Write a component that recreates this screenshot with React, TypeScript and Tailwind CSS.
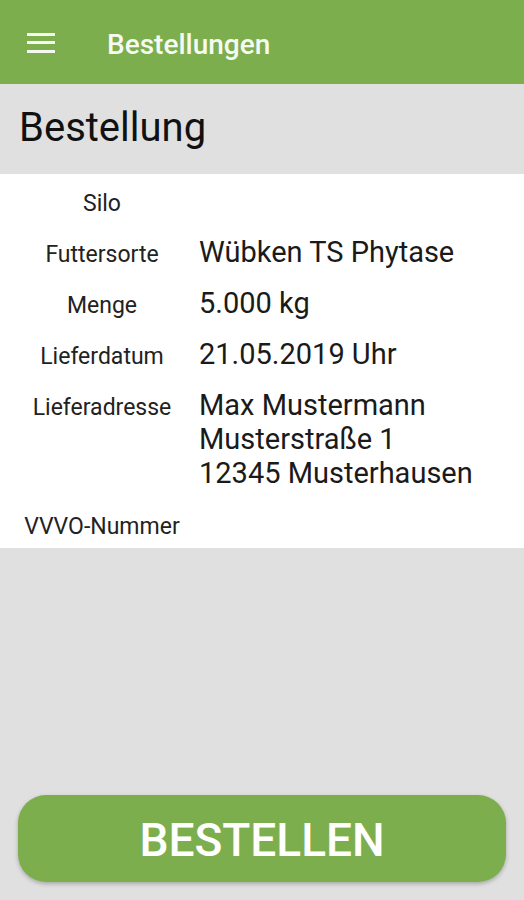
import React from "react";

const rows: { label: string; value: string[] }[] = [
  { label: "Silo", value: [] },
  { label: "Futtersorte", value: ["Wübken TS Phytase"] },
  { label: "Menge", value: ["5.000 kg"] },
  { label: "Lieferdatum", value: ["21.05.2019 Uhr"] },
  { label: "Lieferadresse", value: ["Max Mustermann", "Musterstraße 1", "12345 Musterhausen"] },
  { label: "VVVO-Nummer", value: [] },
];

export default function App() {
  return (
    <div
      className="w-[524px] h-[900px] flex flex-col bg-[#e0e0e0] overflow-hidden"
      style={{ fontFamily: "Roboto, 'Noto Sans', sans-serif" }}
    >
      <header className="h-[84px] bg-[#7dae4e] flex items-center shrink-0">
        <div className="w-[107px] pl-[27px] flex flex-col gap-[5.5px] pt-[1px]">
          <div className="w-[28px] h-[3px] bg-[#f4f8ef]" />
          <div className="w-[28px] h-[3px] bg-[#f4f8ef]" />
          <div className="w-[28px] h-[3px] bg-[#f4f8ef]" />
        </div>
        <div className="text-[#f7faf3] text-[28px] font-medium leading-none pt-[6px]">Bestellungen</div>
      </header>
      <div className="h-[90px] flex items-center pl-[19px] shrink-0">
        <h1 className="text-[40px] text-[#111] leading-none pb-[3px]">Bestellung</h1>
      </div>
      <div className="bg-white pt-[10px] pb-[7px] flex flex-col gap-[17px]">
        {rows.map((r) => (
          <div key={r.label} className="flex items-baseline h-auto">
            <div className="w-[204px] shrink-0 text-center text-[23px] text-[#222] leading-[28px]">
              {r.label}
            </div>
            <div className="-ml-[5px] text-[29px] text-[#1a1a1a] leading-[34px]">
              {r.value.length === 0 ? (
                <div>&nbsp;</div>
              ) : (
                r.value.map((v) => <div key={v}>{v}</div>)
              )}
            </div>
          </div>
        ))}
      </div>
      <div className="flex-1" />
      <div className="px-[18px] pb-[18px]">
        <button className="w-full h-[87px] rounded-[28px] bg-[#7dae4e] text-white text-[46px] font-medium shadow-[0_2px_4px_rgba(0,0,0,0.25)] leading-none pt-[2px]">
          BESTELLEN
        </button>
      </div>
    </div>
  );
}
